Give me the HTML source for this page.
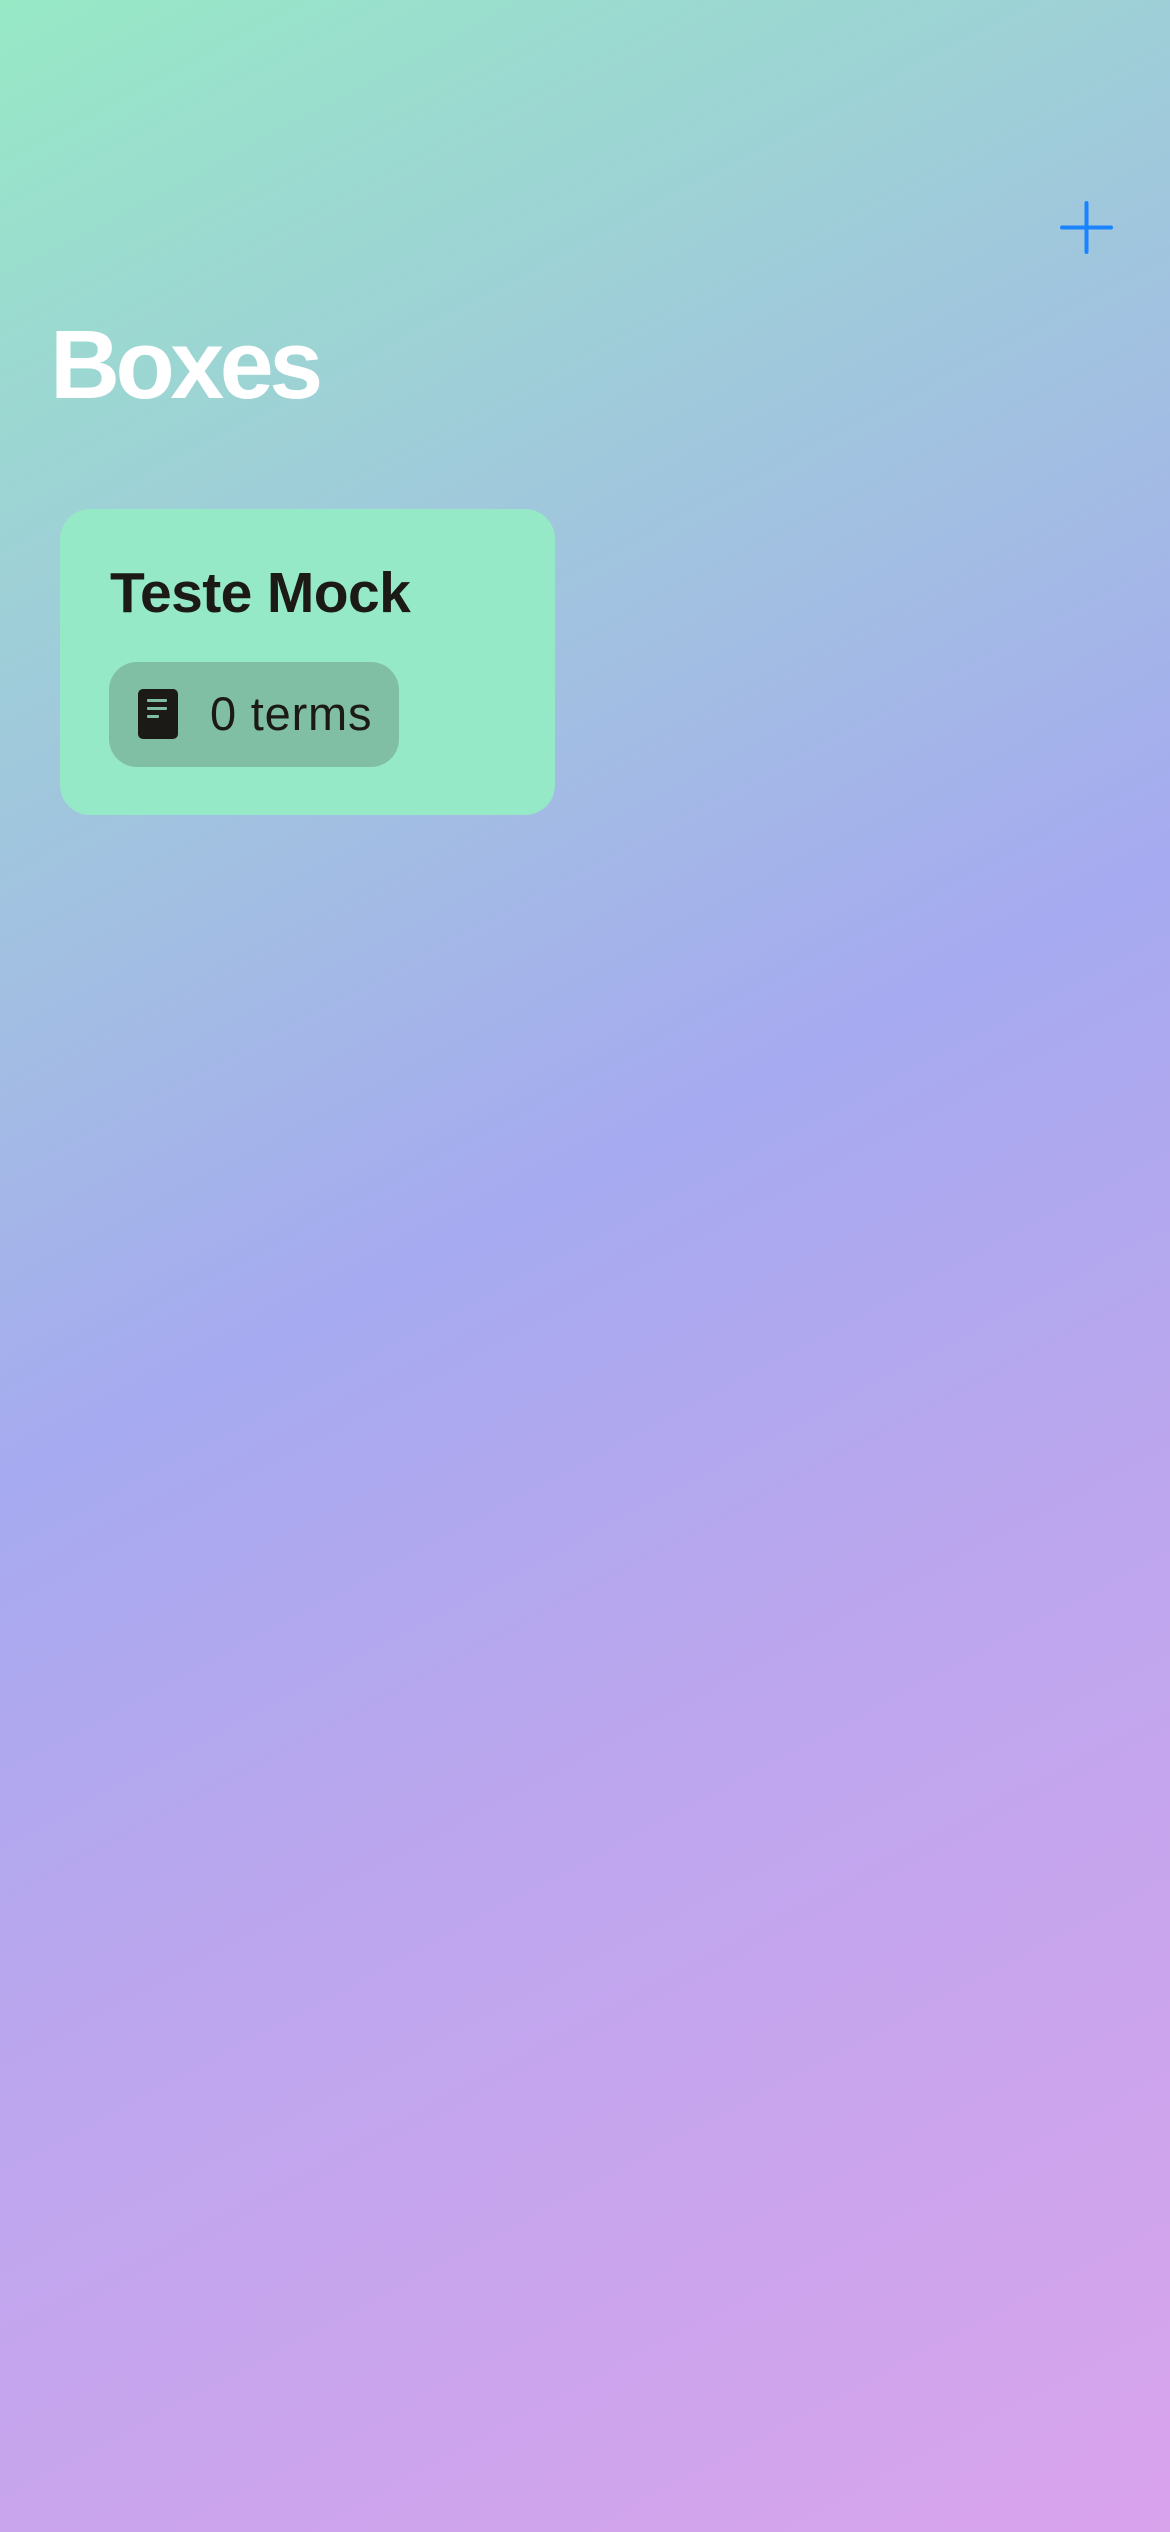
<!DOCTYPE html>
<html><head><meta charset="utf-8"><style>
html,body{margin:0;padding:0}
body{width:1170px;height:2532px;position:relative;overflow:hidden;font-family:"Liberation Sans",sans-serif;
background:linear-gradient(152deg,#97e9c6 0%,#a0c8dc 25%,#a6aaf0 47%,#bda6ee 67%,#d9a3ec 100%);}
.plus{position:absolute;left:1060px;top:201px;width:53px;height:53px}
h1{position:absolute;left:50px;top:300px;margin:0;font-size:97px;font-weight:bold;color:#fff;letter-spacing:-4.5px;line-height:130px}
.card{position:absolute;left:60px;top:509px;width:495px;height:306px;background:#96e9c6;border-radius:30px}
.title{position:absolute;left:50px;top:44px;font-size:57px;font-weight:bold;color:#1c1a17;letter-spacing:-0.6px;line-height:80px}
.pill{position:absolute;left:49px;top:153px;width:290px;height:105px;background:#80bfa3;border-radius:28px}
.icon{position:absolute;left:29px;top:27px;width:40px;height:50px;background:#1c1a17;border-radius:5px}
.icon i{position:absolute;left:9px;height:3px;background:#80bfa3;border-radius:1px}
.txt{position:absolute;left:101px;top:22px;font-size:47px;color:#1c1a17;line-height:60px;letter-spacing:0.8px}
</style></head><body>
<svg class="plus" viewBox="0 0 53 53"><path d="M26.5 2V51M2 26.5H51" stroke="#1a84ff" stroke-width="4" stroke-linecap="round"/></svg>
<h1>Boxes</h1>
<div class="card">
<div class="title">Teste Mock</div>
<div class="pill"><div class="icon"><i style="top:10px;width:20px"></i><i style="top:18px;width:20px"></i><i style="top:26px;width:12px"></i></div><div class="txt">0 terms</div></div>
</div>
</body></html>
